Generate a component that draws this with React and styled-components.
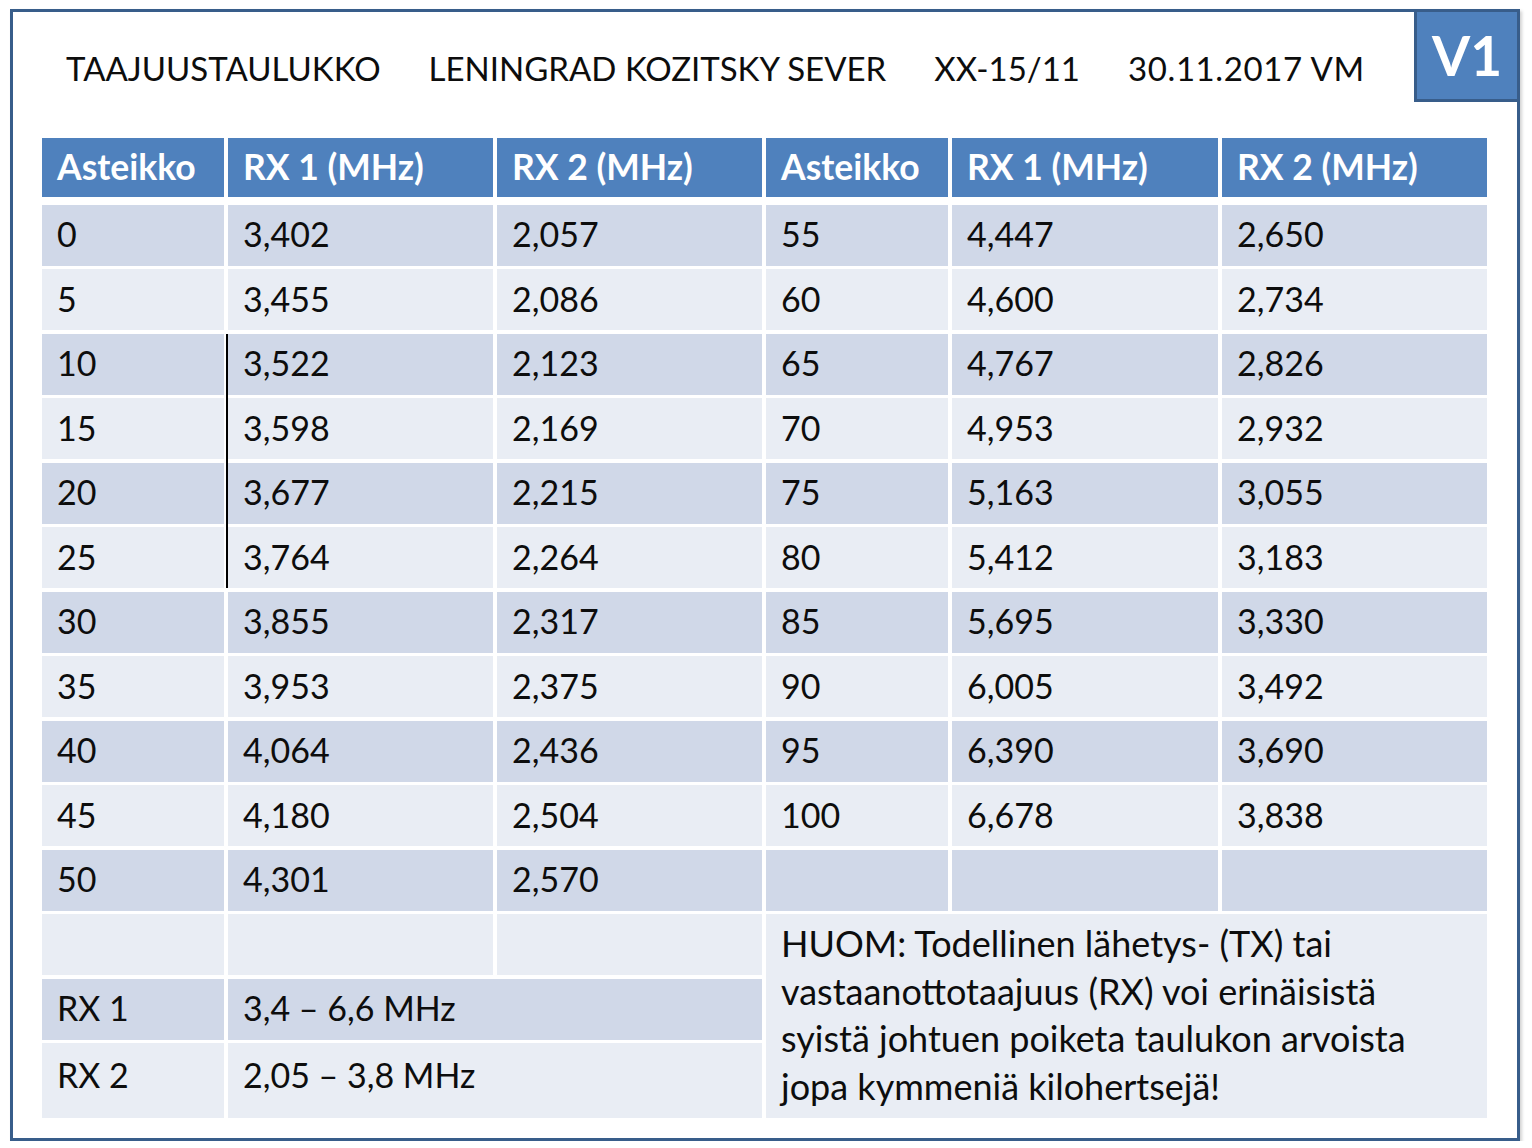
import React from 'react'
import styled, { createGlobalStyle } from 'styled-components'

const palette = {
  frame: '#385d8a',
  accent: '#4f81bd',
  dark: '#d0d8e8',
  light: '#e9edf4',
  text: '#0d0d0d',
}

const GlobalStyle = createGlobalStyle`
  html, body {
    margin: 0;
    padding: 0;
    background: #ffffff;
  }
  body {
    font-family: Lato, 'Open Sans', sans-serif;
    color: ${palette.text};
  }
`

const Frame = styled.div`
  position: relative;
  box-sizing: border-box;
  width: 1510px;
  height: 1132px;
  margin: 9px 0 0 10px;
  border: 3px solid ${palette.frame};
  box-shadow: 2px 2px 3px rgba(0, 0, 0, 0.18);
  padding: 0 0 0 29px;
  display: flex;
  flex-direction: column;
`

const Badge = styled.div`
  position: absolute;
  top: -3px;
  right: -3px;
  box-sizing: border-box;
  width: 106px;
  height: 93px;
  border: 3px solid ${palette.frame};
  background: ${palette.accent};
  color: #ffffff;
  font-weight: 700;
  font-size: 55px;
  display: flex;
  align-items: center;
  justify-content: center;
  padding-bottom: 1px;
`

const TitleBar = styled.div`
  height: 126px;
  display: flex;
  align-items: center;
  gap: 48px;
  padding: 0 0 14px 24px;
  box-sizing: border-box;
  font-size: 33px;
  white-space: nowrap;
`

const TitleDate = styled.span`
  letter-spacing: 0.6px;
`

const Columns = `182px 265px 265px 182px 266px 265px`

const HeaderRow = styled.div`
  display: grid;
  grid-template-columns: ${Columns};
  column-gap: 4px;
  height: 59px;
  margin-bottom: 7.5px;
`

const HeadCell = styled.div`
  background: ${palette.accent};
  color: #ffffff;
  font-weight: 700;
  font-size: 35.5px;
  display: flex;
  align-items: center;
  padding-left: 15px;
  padding-bottom: 2px;
`

const Body = styled.div`
  display: grid;
  grid-template-columns: ${Columns};
  grid-template-rows: repeat(13, 61px) 75px;
  column-gap: 4px;
  row-gap: 3.5px;
`

const Cell = styled.div`
  position: relative;
  background: ${p => (p.$dark ? palette.dark : palette.light)};
  grid-column: ${p => p.$span || 'auto'};
  font-size: 34px;
  display: flex;
  align-items: center;
  padding-left: 15px;
  padding-bottom: ${p => (p.$tall ? '13px' : '3px')};
  white-space: nowrap;

  ${p =>
    p.$marked &&
    `
    &::before {
      content: '';
      position: absolute;
      left: -2px;
      top: ${p.$markTop ? '0' : '-4px'};
      bottom: 0;
      width: 2px;
      background: #000;
    }
  `}
`

const Note = styled.div`
  grid-column: 4 / 7;
  grid-row: 12 / 15;
  background: ${palette.light};
  font-size: 36px;
  line-height: 47.5px;
  padding: 6px 0 0 15px;
  white-space: nowrap;
`

const rows = [
  ['0', '3,402', '2,057', '55', '4,447', '2,650'],
  ['5', '3,455', '2,086', '60', '4,600', '2,734'],
  ['10', '3,522', '2,123', '65', '4,767', '2,826'],
  ['15', '3,598', '2,169', '70', '4,953', '2,932'],
  ['20', '3,677', '2,215', '75', '5,163', '3,055'],
  ['25', '3,764', '2,264', '80', '5,412', '3,183'],
  ['30', '3,855', '2,317', '85', '5,695', '3,330'],
  ['35', '3,953', '2,375', '90', '6,005', '3,492'],
  ['40', '4,064', '2,436', '95', '6,390', '3,690'],
  ['45', '4,180', '2,504', '100', '6,678', '3,838'],
  ['50', '4,301', '2,570', '', '', ''],
]

const headers = ['Asteikko', 'RX 1 (MHz)', 'RX 2 (MHz)', 'Asteikko', 'RX 1 (MHz)', 'RX 2 (MHz)']

const App = () => (
  <>
    <GlobalStyle />
    <Frame>
      <Badge>V1</Badge>
      <TitleBar>
        <span>TAAJUUSTAULUKKO</span>
        <span>LENINGRAD KOZITSKY SEVER</span>
        <span>XX-15/11</span>
        <TitleDate>30.11.2017 VM</TitleDate>
      </TitleBar>
      <HeaderRow>
        {headers.map((h, i) => (
          <HeadCell key={i}>{h}</HeadCell>
        ))}
      </HeaderRow>
      <Body>
        {rows.map((row, r) =>
          row.map((v, c) => (
            <Cell
              key={r + '-' + c}
              $dark={r % 2 === 0}
              $marked={c === 1 && r >= 2 && r <= 5}
              $markTop={r === 2}
            >
              {v}
            </Cell>
          ))
        )}
        <Cell />
        <Cell />
        <Cell />
        <Note>
          HUOM: Todellinen lähetys- (TX) tai
          <br />
          vastaanottotaajuus (RX) voi erinäisistä
          <br />
          syistä johtuen poiketa taulukon arvoista
          <br />
          jopa kymmeniä kilohertsejä!
        </Note>
        <Cell $dark>RX 1</Cell>
        <Cell $dark $span="2 / 4">
          3,4 – 6,6 MHz
        </Cell>
        <Cell $tall>RX 2</Cell>
        <Cell $tall $span="2 / 4">
          2,05 – 3,8 MHz
        </Cell>
      </Body>
    </Frame>
  </>
)

export default App
